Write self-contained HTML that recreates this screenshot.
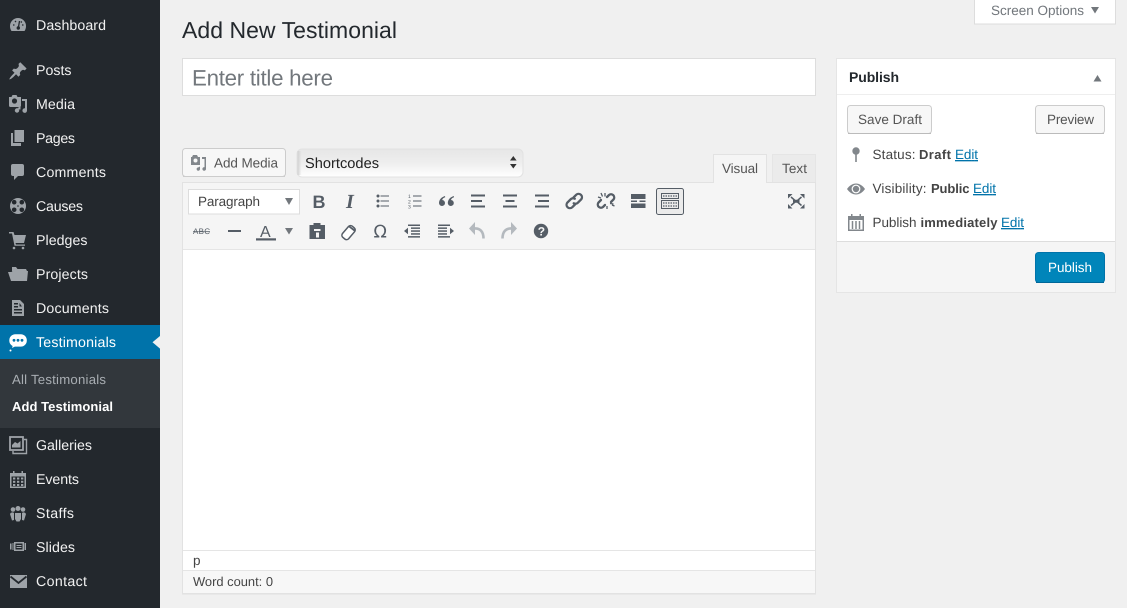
<!DOCTYPE html>
<html lang="en"><head><meta charset="utf-8"><title>Add New Testimonial</title>
<style>
html,body{margin:0;padding:0;background:#f0f0f0;width:1127px;height:608px;overflow:hidden}
svg{display:block}
text{font-family:"Liberation Sans",Arial,sans-serif;white-space:pre;text-rendering:geometricPrecision}
.m{font-size:14.2px;fill:#f1f1f1}
.d{font-size:13.5px;fill:#444}
.b{font-weight:bold}
.l{font-size:13.5px;fill:#0073aa;text-decoration:underline}
.i{fill:#9ea3a8}
.k{fill:#555d66}
</style></head><body>
<svg width="1127" height="608" viewBox="0 0 1127 608" xmlns="http://www.w3.org/2000/svg">
<rect width="1127" height="608" fill="#f0f0f0"/>
<!-- sidebar -->
<rect width="160" height="608" fill="#23282d"/>
<rect y="325" width="160" height="34" fill="#0073aa"/>
<rect y="359" width="160" height="69" fill="#32373c"/>
<path d="M160 336l-7.500 6.300 7.500 6.300z" fill="#f0f0f0"/>
<text class="m" x="36" y="30" textLength="70">Dashboard</text>
<text class="m" x="36" y="75" textLength="35.5">Posts</text>
<text class="m" x="36" y="109" textLength="39">Media</text>
<text class="m" x="36" y="143" textLength="39">Pages</text>
<text class="m" x="36" y="177" textLength="70">Comments</text>
<text class="m" x="36" y="211" textLength="47">Causes</text>
<text class="m" x="36" y="245" textLength="51.5">Pledges</text>
<text class="m" x="36" y="279" textLength="52">Projects</text>
<text class="m" x="36" y="313" textLength="73">Documents</text>
<text class="m" x="36" y="347" textLength="80" style="fill:#fff">Testimonials</text>
<text x="12" y="384" textLength="94" style="font-size:13.2px;fill:#a9aeb3">All Testimonials</text>
<text class="b" x="12" y="411" textLength="101" style="font-size:13px;fill:#fff">Add Testimonial</text>
<text class="m" x="36" y="450" textLength="56">Galleries</text>
<text class="m" x="36" y="484" textLength="43">Events</text>
<text class="m" x="36" y="518" textLength="38">Staffs</text>
<text class="m" x="36" y="552" textLength="39">Slides</text>
<text class="m" x="36" y="586" textLength="51">Contact</text>
<!-- sidebar icons -->
<path class="i" d="M18 18a8 8 0 0 0-8 8c0 2 .6 3.700 1.500 5h13c.9-1.300 1.500-3 1.500-5a8 8 0 0 0-8-8z"/>
<path d="M19.500 21l-1 6M13 25h1.500M22 25h1.500M15 21l1 1M21.800 21.500l-1 1" stroke="#23282d" stroke-width="1.300" fill="none"/>
<circle cx="18.300" cy="28" r="1.700" fill="#23282d"/>
<path class="i" transform="translate(8 61)" d="M10.440 3.020l1.820-1.820 6.360 6.350-1.830 1.820c-1.050-.68-2.480-.57-3.410.36l-.75.75c-.92.93-1.040 2.350-.35 3.410l-1.830 1.820-2.410-2.410-2.800 2.790c-.42.420-3.380 2.710-3.800 2.290s1.860-3.390 2.280-3.810l2.790-2.790L4.100 9.360l1.830-1.820c1.050.69 2.480.57 3.400-.36l.75-.75c.93-.92 1.050-2.350.36-3.410z"/>
<path class="i" d="M11.500 97l1-2h4l1 2h3.500v8.500a1.500 1.500 0 0 1-1.500 1.500h-9a1.500 1.500 0 0 1-1.500-1.500V97z"/>
<circle cx="14.500" cy="101" r="2.600" fill="#23282d"/>
<path class="i" d="M22 99h5v11.500a2.300 2.300 0 1 1-2-2.200V101h-3z"/>
<circle class="i" cx="17" cy="110.500" r="2.200"/><path class="i" d="M17.500 108l3-1.500v3h-1.500z"/>
<path class="i" d="M14.500 130H24v12h-9.500zM11 133h2v10h8v3H11z"/>
<path class="i" d="M13 164h9a2 2 0 0 1 2 2v8a2 2 0 0 1-2 2h-4l-4 4v-4h-1a2 2 0 0 1-2-2v-8a2 2 0 0 1 2-2z"/>
<circle class="i" cx="18" cy="206" r="8"/>
<g fill="#23282d"><circle cx="14.200" cy="202.200" r="2.300"/><circle cx="21.800" cy="202.200" r="2.300"/><circle cx="14.200" cy="209.800" r="2.300"/><circle cx="21.800" cy="209.800" r="2.300"/><circle cx="18" cy="206" r=".8"/></g>
<path class="i" d="M9 232h4.500l1 3H26l-2 8H15.500l.5 1.500h9v1.200H14.500L12 233.500H9z"/>
<circle class="i" cx="14" cy="248" r="1.300"/><circle class="i" cx="23" cy="248" r="1.300"/>
<path class="i" d="M12 267h4l1.500 2H26l1 2H12zM8 272h3.500l1-1H28l-1 10H11z"/>
<path class="i" d="M12 300h8l4 4v12H12zM14 303v1.500h4V303zM14 306v1.500h4V306zM14 309v1.500h8V309zM14 312v1.500h8V312zM19.500 303v3.500H22z" fill-rule="evenodd"/>
<rect x="9.300" y="334.300" width="17.500" height="12.300" rx="6" fill="#fff"/>
<path d="M13 345l-1 3 4-2z" fill="#fff"/>
<circle cx="14" cy="340.300" r="1.400" fill="#0073aa"/><circle cx="18" cy="340.300" r="1.400" fill="#0073aa"/><circle cx="22" cy="340.300" r="1.400" fill="#0073aa"/>
<circle cx="10.500" cy="350.500" r="1" fill="#fff"/>
<path d="M24 439.500h2.500v14H13V451" fill="none" stroke="#9ea3a8" stroke-width="1.400"/>
<rect x="10" y="437" width="13" height="13" fill="none" stroke="#9ea3a8" stroke-width="1.800"/>
<path class="i" d="M12 445l3-3 2.500 1.500 3-2.500v6.500h-8.500z"/>
<path class="i" d="M10 473h3v-2h1.500v2h7v-2H23v2h3v15H10zM11.500 476.500v10h13v-10z" fill-rule="evenodd"/>
<g class="i"><rect x="13" y="477.500" width="2.300" height="2"/><rect x="17" y="477.500" width="2.300" height="2"/><rect x="21" y="477.500" width="2.300" height="2"/><rect x="13" y="480.800" width="2.300" height="2"/><rect x="17" y="480.800" width="2.300" height="2"/><rect x="21" y="480.800" width="2.300" height="2"/><rect x="13" y="484" width="2.300" height="2"/><rect x="17" y="484" width="2.300" height="2"/><rect x="21" y="484" width="2.300" height="2"/></g>
<g class="i"><circle cx="13" cy="509.500" r="2.300"/><circle cx="18" cy="508.500" r="2.500"/><circle cx="23" cy="509.500" r="2.300"/>
<path d="M10 514a2.500 2.500 0 0 1 4-1v7l-2 .5zM22 513a2.500 2.500 0 0 1 4 1l-2 6.500-2-.5zM15 513h6v6l-1.500 2.500h-3L15 519z"/></g>
<path class="i" d="M14 542h10v9H14zM15.500 543.500v6h7v-6zM16.500 545h5v1h-5zM16.500 547h5v1h-5zM10 543.500h1.500v6H10zM12.500 543h1v7h-1zM24.500 543h1.500v7h-1.500z" fill-rule="evenodd"/>
<path class="i" d="M10 575h17v13H10z"/>
<path d="M10.500 576.500l8 6.500 8-6.500" fill="none" stroke="#23282d" stroke-width="1.800"/>

<!-- heading -->
<text x="182" y="38" textLength="215" style="font-size:23px;fill:#23282d">Add New Testimonial</text>
<!-- screen options -->
<rect x="974.500" y="-2" width="141" height="26" fill="#fff" stroke="#ddd"/>
<text x="991" y="15" textLength="93" style="font-size:13.5px;fill:#72777c">Screen Options</text>
<path d="M1091 7h8l-4 6.500z" fill="#72777c"/>
<!-- title -->
<rect x="182.500" y="58.500" width="633" height="37" fill="#fff" stroke="#ddd"/>
<text x="192" y="85.500" textLength="141" style="font-size:22.3px;fill:#72777c">Enter title here</text>
<!-- add media -->
<rect x="182.500" y="148.500" width="103" height="28" rx="3" fill="#f7f7f7" stroke="#ccc"/>
<path d="M183 176.500h102" stroke="#ccc"/>
<path fill="#82878c" d="M192 157l1-2h4l1 2h2v8h-9v-8z"/>
<path fill="#82878c" d="M202 157h4v12a1.800 1.800 0 1 1-1.500-1.800V159h-2.500zM197 168l3-1.500v2.500a1.700 1.700 0 1 1-1.300-1.600z"/>
<circle cx="195.500" cy="160.500" r="2" fill="#f7f7f7"/>
<text x="214" y="167.500" textLength="64" style="font-size:13.5px;fill:#555">Add Media</text>
<!-- shortcodes select -->
<defs>
<linearGradient id="sel" x1="0" y1="0" x2="0" y2="1"><stop offset="0" stop-color="#e6e6e6"/><stop offset=".5" stop-color="#eeeeee"/><stop offset="1" stop-color="#fff"/></linearGradient>
<linearGradient id="selL" x1="0" y1="0" x2="1" y2="0"><stop offset="0" stop-color="#d0d0d0"/><stop offset="1" stop-color="#d0d0d0" stop-opacity="0"/></linearGradient>
</defs>
<rect x="297" y="149" width="226" height="28" rx="5" fill="url(#sel)" stroke="#e2e2e2"/>
<rect x="297.500" y="151" width="4" height="24" fill="url(#selL)"/>
<path d="M510 160.500l3.300-4.500 3.300 4.500zM510 164h6.600l-3.300 4.500z" fill="#333"/>
<text x="305" y="168" textLength="74" style="font-size:14.6px;fill:#222">Shortcodes</text>
<!-- tabs -->
<rect x="772.500" y="154.500" width="43" height="28" fill="#ebebeb" stroke="#e5e5e5"/>
<text x="782" y="173" textLength="25" style="font-size:13.5px;fill:#555">Text</text>
<!-- editor -->
<rect x="182.500" y="182.500" width="633" height="411" fill="#fff" stroke="#e2e2e2"/>
<rect x="183" y="183" width="632" height="66" fill="#f5f5f5"/>
<path d="M183 249.500h632" stroke="#e5e5e5"/>
<path d="M183 550.500h632M183 570.500h632" stroke="#e5e5e5"/>
<rect x="183" y="571" width="632" height="22" fill="#f7f7f7"/>
<path d="M182 594.500h634" stroke="#e8e8e8"/>
<text x="193" y="565" style="font-size:13.5px;fill:#444">p</text>
<text x="193" y="586" textLength="80" style="font-size:12.900px;fill:#444">Word count: 0</text>
<rect x="713.500" y="154.500" width="53" height="28" fill="#f5f5f5" stroke="#e2e2e2"/>
<rect x="714" y="180" width="52" height="4" fill="#f5f5f5"/>
<text x="722" y="173" textLength="36" style="font-size:13.5px;fill:#555">Visual</text>
<!-- toolbar row 1 -->
<rect x="188.500" y="189.500" width="111" height="24.500" fill="#fff" stroke="#ddd"/>
<text x="198" y="206" textLength="62" style="font-size:13.5px;fill:#444">Paragraph</text>
<path d="M285 198h8l-4 7z" fill="#72777c"/>
<text x="312.500" y="208" class="b" style="font-size:18px;fill:#555d66">B</text>
<text x="346" y="208" class="b" style="font-size:20px;font-style:italic;font-family:'Liberation Serif',serif;fill:#555d66">I</text>
<g class="k">
<circle cx="378" cy="196" r="1.500"/><circle cx="378" cy="201" r="1.500"/><circle cx="378" cy="206" r="1.500"/>
<rect x="380.500" y="195.500" width="8.500" height="1"/><rect x="380.500" y="200.500" width="8.500" height="1"/><rect x="380.500" y="205.500" width="8.500" height="1"/>
<rect x="413" y="195.500" width="8.500" height="1"/><rect x="413" y="200.500" width="8.500" height="1"/><rect x="413" y="205.500" width="8.500" height="1"/>
</g>
<text x="408" y="198" style="font-size:5px;fill:#555d66">1</text><text x="408" y="203.500" style="font-size:5px;fill:#555d66">2</text><text x="408" y="208.500" style="font-size:5px;fill:#555d66">3</text>
<path class="k" d="M445 196c-3.500 1-6 3.800-6 7a3 3 0 1 0 3.200-3c.3-1.200 1.200-2 3-2.700zM453.800 196c-3.500 1-6 3.800-6 7a3 3 0 1 0 3.200-3c.3-1.200 1.200-2 3-2.700z"/>
<g class="k">
<rect x="471" y="194.500" width="14" height="2"/><rect x="471" y="200" width="11" height="2"/><rect x="471" y="205.500" width="14" height="2"/>
<rect x="503" y="194.500" width="14" height="2"/><rect x="505.500" y="200" width="9" height="2"/><rect x="503" y="205.500" width="14" height="2"/>
<rect x="535" y="194.500" width="14" height="2"/><rect x="538" y="200" width="11" height="2"/><rect x="535" y="205.500" width="14" height="2"/>
</g>
<g fill="none" stroke="#555d66" stroke-width="2.300" stroke-linecap="round">
<path d="M573.500 197.500l2.800-2.800a3.400 3.400 0 0 1 4.800 4.800l-3.200 3.200a3.400 3.400 0 0 1-4.200.6"/>
<path d="M575 204.500l-2.800 2.800a3.400 3.400 0 0 1-4.800-4.800l3.200-3.200a3.400 3.400 0 0 1 4.200-.6"/>
<path d="M607 197l2-2a3.200 3.200 0 0 1 4.500 4.500l-2.500 2.500M605 205l-2 2a3.200 3.200 0 0 1-4.500-4.500l2.500-2.500"/>
</g>
<path d="M601 193l1.500 3.500M605 193v3.500M598 197l3 1M612 205l2.500 1M607 206v3M610 203.500l3.500.5" stroke="#555d66" stroke-width="1.300"/>
<g class="k"><rect x="631" y="194" width="14.500" height="5"/><rect x="631" y="200.500" width="6" height="1.500"/><rect x="639.500" y="200.500" width="6" height="1.500"/><rect x="631" y="203.500" width="14.500" height="4.500"/></g>
<rect x="656.500" y="188.500" width="27" height="26" rx="2" fill="#ebebeb" stroke="#555d66"/>
<rect x="661.500" y="193.500" width="17" height="5" fill="none" stroke="#555d66"/>
<rect x="661.500" y="200.500" width="17" height="8" fill="none" stroke="#555d66"/>
<path d="M663 196h14M663 203h14M663 206h14" stroke="#555d66" stroke-dasharray="1.500 1" stroke-width="1.200" fill="none"/>
<g class="k"><path d="M788 194h4.500l-4.500 4.500zM804.500 194H800l4.500 4.500zM788 208.500h4.500l-4.500-4.500zM804.500 208.500H800l4.500-4.500z"/></g>
<path d="M791 197l4 3.500h2.500l4-3.500M791 205.500l4-3.500h2.500l4 3.500" fill="none" stroke="#555d66" stroke-width="1.500"/>
<rect x="793" y="200" width="6.500" height="2.500" fill="#555d66"/>
<!-- toolbar row 2 -->
<text x="193" y="234" textLength="17" style="font-size:8px;fill:#555d66;text-decoration:line-through">ABC</text>
<rect x="228" y="230" width="13" height="2" fill="#555d66"/>
<text x="260" y="237" style="font-size:16px;fill:#555d66">A</text>
<rect x="256" y="238.300" width="20" height="2.200" fill="#555d66"/>
<path d="M285 228h8l-4 6.500z" fill="#72777c"/>
<path class="k" d="M309.500 225h4v-2h7v2h4.500v14h-15.500zM314 229h6.500v2H314zM316 232.500h3v5h-3z" fill-rule="evenodd"/>
<path d="M342.500 233.500l6-7a2.800 2.800 0 0 1 3.800-.3l2 1.700a2.800 2.800 0 0 1 .3 3.800l-6 7a2.800 2.800 0 0 1-3.800.3l-2-1.700a2.800 2.800 0 0 1-.3-3.800z" fill="#fff" stroke="#555d66" stroke-width="1.500"/>
<path d="M350 226l5.500 4-.6 2-6.400-5z" fill="#555d66"/>
<text x="373.500" y="237.500" style="font-size:17.500px;fill:#555d66;font-family:'DejaVu Sans',sans-serif">Ω</text>
<g class="k">
<rect x="408" y="224.500" width="12" height="1.500"/><rect x="411" y="227.400" width="9" height="1.500"/><rect x="411" y="230.300" width="9" height="1.500"/><rect x="411" y="233.200" width="9" height="1.500"/><rect x="408" y="236.100" width="12" height="1.500"/><path d="M404 231l4-3.300v6.600z"/>
<rect x="438" y="224.500" width="12" height="1.500"/><rect x="438" y="227.400" width="9" height="1.500"/><rect x="438" y="230.300" width="9" height="1.500"/><rect x="438" y="233.200" width="9" height="1.500"/><rect x="438" y="236.100" width="12" height="1.500"/><path d="M454 231l-4-3.300v6.600z"/>
</g>
<path d="M469 228.500l6-6.500v13z" fill="#b4b9be"/>
<path d="M474 228.500c6-.5 9.500 3 9.500 10" fill="none" stroke="#b4b9be" stroke-width="2.600"/>
<path d="M517 228.500l-6-6.500v13z" fill="#b4b9be"/>
<path d="M512 228.500c-6-.5-9.500 3-9.500 10" fill="none" stroke="#b4b9be" stroke-width="2.600"/>
<circle cx="541" cy="231" r="7.200" fill="#555d66"/>
<text x="537.700" y="235.500" class="b" style="font-size:12px;fill:#f5f5f5">?</text>
<!-- publish box -->
<rect x="836.500" y="58.500" width="279" height="234" fill="#fff" stroke="#e5e5e5"/>
<path d="M837 94.500h278" stroke="#eee"/>
<text class="b" x="849" y="82" textLength="50" style="font-size:14px;fill:#23282d">Publish</text>
<path d="M1093.500 81.500h8l-4-6.500z" fill="#72777c"/>
<rect x="847.500" y="105.500" width="84" height="28" rx="3" fill="#f7f7f7" stroke="#ccc"/>
<path d="M848 133.500h83" stroke="#bbb"/>
<text x="858" y="124" textLength="64" style="font-size:13.5px;fill:#555">Save Draft</text>
<rect x="1035.500" y="105.500" width="69" height="28" rx="3" fill="#f7f7f7" stroke="#ccc"/>
<path d="M1036 133.500h68" stroke="#bbb"/>
<text x="1047" y="124" textLength="47" style="font-size:13.5px;fill:#555">Preview</text>
<!-- status -->
<circle cx="856" cy="151" r="3.700" fill="#82878c"/><rect x="855.200" y="153" width="1.600" height="9" fill="#82878c"/>
<text class="d" x="872.500" y="159" textLength="43">Status:</text>
<text class="d b" x="919" y="159" textLength="32" style="font-size:13px">Draft</text>
<text class="l" x="955" y="159" textLength="23">Edit</text>
<path d="M847 189c2.500-3.500 5.500-5.500 9-5.500s6.500 2 9 5.500c-2.500 3.500-5.500 5.500-9 5.500s-6.500-2-9-5.500z" fill="#82878c"/>
<circle cx="856" cy="189" r="3.800" fill="#82878c" stroke="#fff" stroke-width="1.200"/>
<text class="d" x="872.500" y="193" textLength="54">Visibility:</text>
<text class="d b" x="931" y="193" textLength="38.5" style="font-size:13px">Public</text>
<text class="l" x="973" y="193" textLength="23">Edit</text>
<path fill="#82878c" d="M848 216h3v-2h1.500v2h7v-2h1.500v2h3v15h-16zM849.500 220v9.500h13V220z" fill-rule="evenodd"/>
<path d="M852.500 221v8M856 221v8M859.500 221v8" stroke="#82878c" stroke-width="1.500"/>
<text class="d" x="872.500" y="227" textLength="44">Publish</text>
<text class="d b" x="920.500" y="227" textLength="77" style="font-size:13px">immediately</text>
<text class="l" x="1001" y="227" textLength="23">Edit</text>
<rect x="837" y="242" width="278" height="50" fill="#f5f5f5"/>
<path d="M837 241.500h278" stroke="#ddd"/>
<rect x="1035.500" y="252.500" width="69" height="30" rx="3" fill="#0085ba" stroke="#0073aa"/>
<path d="M1036 282.500h68" stroke="#006799"/>
<text x="1048" y="272" textLength="44" style="font-size:13.5px;fill:#fff">Publish</text>
</svg>
</body></html>
